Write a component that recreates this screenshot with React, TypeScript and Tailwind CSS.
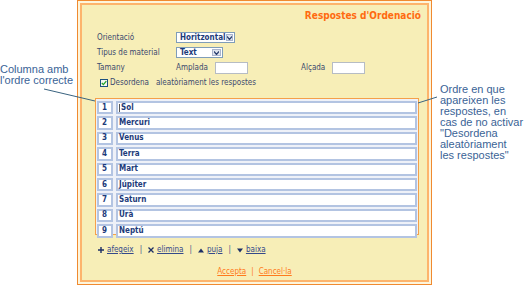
import type { ReactNode } from 'react'

const planets = ['Sol', 'Mercuri', 'Venus', 'Terra', 'Mart', 'Júpiter', 'Saturn', 'Urà', 'Neptú']

const formFont = { fontFamily: '"DejaVu Sans Condensed", "DejaVu Sans", Verdana, sans-serif' }

function Select({ value, width }: { value: string; width: string }) {
  return (
    <div className={`flex h-[11px] items-stretch border border-[#7f9db9] bg-white ${width}`}>
      <span className="flex flex-1 items-center pl-[3px] text-[8px] font-bold leading-none text-[#1d3b7a]">{value}</span>
      <span className="m-[1px] flex w-[9px] items-center justify-center border border-[#a9b4cc] bg-[#dfe4ee]">
        <svg width="5" height="4" viewBox="0 0 5 4">
          <path d="M0 0.5 L2.5 3.5 L5 0.5" fill="none" stroke="#2a3f70" strokeWidth="1.2" />
        </svg>
      </span>
    </div>
  )
}

function Field({ width }: { width: string }) {
  return <div className={`h-[12px] border border-[#b6bcc4] bg-white ${width}`} />
}

function ToolLink({ icon, label }: { icon: ReactNode; label: string }) {
  return (
    <span className="flex items-center gap-[3px]">
      {icon}
      <span className="text-[#34498a] underline decoration-[#34498a]">{label}</span>
    </span>
  )
}

function Sep() {
  return <span className="px-[6px] text-[#34498a]">|</span>
}

export default function App() {
  return (
    <div className="relative flex h-[285px] w-[524px] overflow-hidden bg-white">
      <div
        className="w-[77px] shrink-0 pt-[64px] text-[11px] leading-[11px] text-[#3a6396]"
        style={{ fontFamily: '"Liberation Sans", Arial, sans-serif' }}
      >
        <p>Columna amb</p>
        <p>l'ordre correcte</p>
      </div>

      <div className="h-[285px] w-[355px] shrink-0 border border-[#f08a30] bg-[#fdf5dc] p-[2px]" style={formFont}>
        <div className="flex h-full flex-col border-2 border-[#fdb46c] bg-[#f7eeb7]">
          <div className="flex h-[20px] items-center justify-end pr-[6px] text-[10px] font-bold text-[#ff6a10]">
            Respostes d'Ordenació
          </div>

          <div className="pl-[15px] pt-[5px] text-[8px] text-[#3c4a6e]">
            <div className="flex h-[15px] items-center">
              <span className="w-[79px]">Orientació</span>
              <Select value="Horitzontal" width="w-[59px]" />
            </div>
            <div className="flex h-[15px] items-center">
              <span className="w-[79px]">Tipus de material</span>
              <Select value="Text" width="w-[47px]" />
            </div>
            <div className="flex h-[15px] items-center">
              <span className="w-[79px]">Tamany</span>
              <span className="w-[39px]">Amplada</span>
              <Field width="w-[33px]" />
              <span className="ml-[53px] w-[31px]">Alçada</span>
              <Field width="w-[33px]" />
            </div>
            <div className="flex h-[15px] items-center">
              <svg width="8" height="8" viewBox="0 0 8 8" className="ml-[3px] mr-[2px]">
                <rect x="0.5" y="0.5" width="7" height="7" fill="#f4f8ef" stroke="#1c5180" />
                <path d="M1.8 4 L3.4 5.6 L6.3 2.2" fill="none" stroke="#22a329" strokeWidth="1.3" />
              </svg>
              <span>Desordena</span>
              <span className="ml-[7px]">aleatòriament les respostes</span>
            </div>
          </div>

          <div className="ml-[13px] mr-[8px] mt-[8px] flex h-[137px] flex-col gap-[2px] border border-[#f5a04a] bg-[#eef1f8] px-[1px] pt-[2px]">
            {planets.map((p, i) => (
              <div key={p} className="flex h-[13.4px] gap-[3px]">
                <div className="flex w-[16px] items-center border-2 border-[#b3c4e2] bg-white pl-[3px] text-[8px] font-bold text-[#1d3b7a]">
                  {i + 1}
                </div>
                <div className="flex flex-1 items-center border-2 border-[#b3c4e2] bg-white pl-[1px] text-[8px] font-bold text-[#1d3b7a]">
                  {i === 0 ? <span className="mr-[1px] h-[8px] w-px bg-[#555]" /> : null}
                  {p}
                </div>
              </div>
            ))}
          </div>

          <div className="ml-[16px] mt-[8px] flex h-[14px] items-center text-[8px]">
            <ToolLink
              label="afegeix"
              icon={
                <svg width="6" height="6" viewBox="0 0 6 6">
                  <path d="M3 0 V6 M0 3 H6" stroke="#1d2f66" strokeWidth="1.4" />
                </svg>
              }
            />
            <Sep />
            <ToolLink
              label="elimina"
              icon={
                <svg width="6" height="6" viewBox="0 0 6 6">
                  <path d="M0.5 0.5 L5.5 5.5 M5.5 0.5 L0.5 5.5" stroke="#1d2f66" strokeWidth="1.3" />
                </svg>
              }
            />
            <Sep />
            <ToolLink
              label="puja"
              icon={
                <svg width="6" height="5" viewBox="0 0 6 5">
                  <path d="M3 0.5 L6 4.5 H0 Z" fill="#1d2f66" />
                </svg>
              }
            />
            <Sep />
            <ToolLink
              label="baixa"
              icon={
                <svg width="6" height="5" viewBox="0 0 6 5">
                  <path d="M0 0.5 H6 L3 4.5 Z" fill="#1d2f66" />
                </svg>
              }
            />
          </div>

          <div className="mt-[8px] flex h-[14px] items-center justify-center text-[8px] text-[#ff7a1c]">
            <span className="underline">Accepta</span>
            <span className="px-[5px]">|</span>
            <span className="underline">Cancel·la</span>
          </div>
        </div>
      </div>

      <div
        className="shrink-0 pl-[8px] pt-[84px] text-[11px] leading-[11px] text-[#3a6396]"
        style={{ fontFamily: '"Liberation Sans", Arial, sans-serif' }}
      >
        <p>Ordre en que</p>
        <p>apareixen les</p>
        <p>respostes, en</p>
        <p>cas de no activar</p>
        <p>"Desordena</p>
        <p>aleatòriament</p>
        <p>les respostes"</p>
      </div>

      <svg className="pointer-events-none absolute left-0 top-0" width="524" height="285">
        <line x1="44" y1="89" x2="95" y2="101" stroke="#3a6380" strokeWidth="1" />
        <line x1="418" y1="103" x2="437" y2="97" stroke="#3a6380" strokeWidth="1" />
      </svg>
    </div>
  )
}
